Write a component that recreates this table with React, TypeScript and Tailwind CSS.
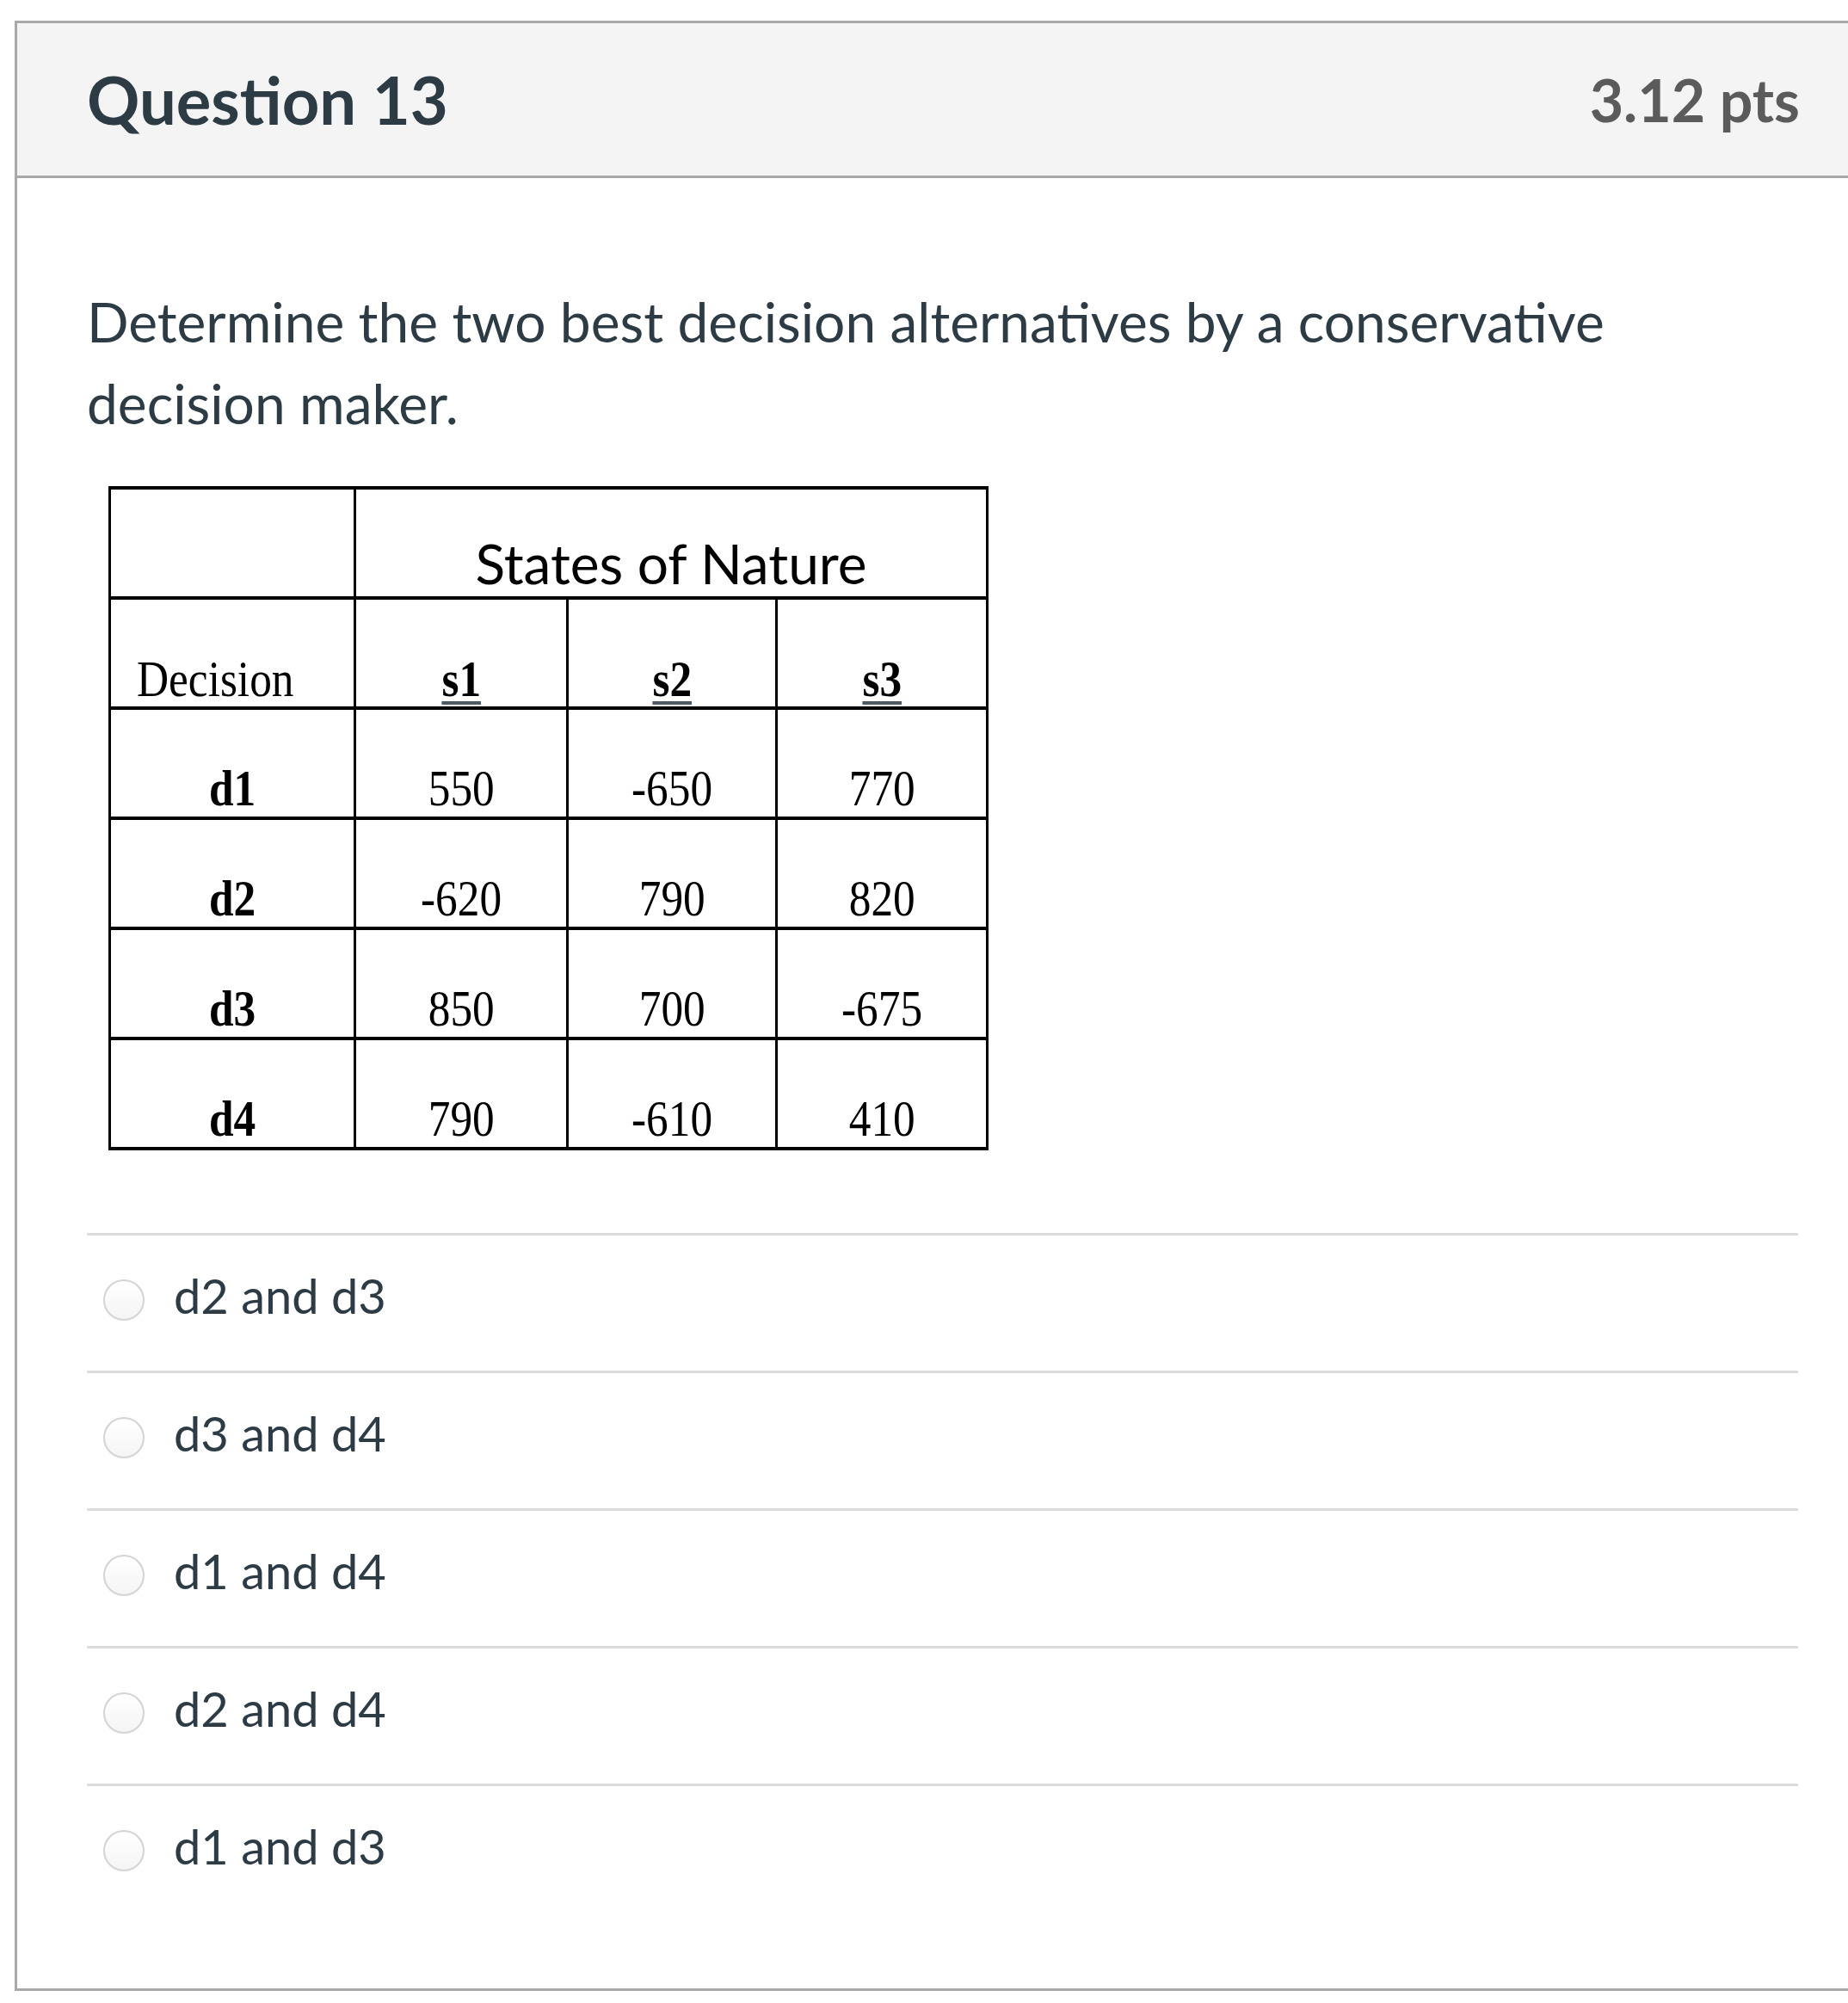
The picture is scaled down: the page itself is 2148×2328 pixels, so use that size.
import React from "react";

const lato = { fontFamily: "Lato, 'Noto Sans', sans-serif" };

const rows = [
    { label: "d1", values: ["550", "-650", "770"] },
    { label: "d2", values: ["-620", "790", "820"] },
    { label: "d3", values: ["850", "700", "-675"] },
    { label: "d4", values: ["790", "-610", "410"] },
];

const answers = ["d2 and d3", "d3 and d4", "d1 and d4", "d2 and d4", "d1 and d3"];

// the payoff table is a scanned image in the original, so the serif text is squeezed a bit
const Serif: React.FC<{ children: React.ReactNode; bold?: boolean; left?: boolean }> = ({ children, bold, left }) => (
    <span
        className={`inline-block text-[59px] leading-none text-black scale-x-[0.87] font-['Liberation_Serif','Times_New_Roman',serif] ${bold ? "font-bold" : "font-normal"} ${left ? "origin-left" : "origin-center"}`}
    >
        {children}
    </span>
);

const PayoffTable: React.FC = () => (
    <div className="grid grid-cols-[285px_247px_243px_245px] border-l-[3px] border-t-4 border-black w-fit ml-[25px] mt-[49px]">
        <div className="h-[128px] border-r-[3px] border-b-4 border-black" />
        <div className="col-span-3 h-[128px] border-r-[3px] border-b-4 border-black flex items-end justify-center pb-[6px]">
            <span className="text-[64px] leading-none text-black" style={lato}>States of Nature</span>
        </div>

        <div className="h-[128px] border-r-[3px] border-b-4 border-black flex items-end pl-[30px] pb-[2px]">
            <Serif left>Decision</Serif>
        </div>
        {["s1", "s2", "s3"].map(s => (
            <div key={s} className="h-[128px] border-r-[3px] border-b-4 border-black flex items-end justify-center pb-[2px]">
                <Serif bold>
                    <span className="underline decoration-[#4d5a63] decoration-4 underline-offset-[6px]">{s}</span>
                </Serif>
            </div>
        ))}

        {rows.map(row => (
            <React.Fragment key={row.label}>
                <div className="h-[128px] border-r-[3px] border-b-4 border-black flex items-end justify-center pb-[3px]">
                    <Serif bold>{row.label}</Serif>
                </div>
                {row.values.map((v, i) => (
                    <div key={i} className="h-[128px] border-r-[3px] border-b-4 border-black flex items-end justify-center pb-[3px]">
                        <Serif>{v}</Serif>
                    </div>
                ))}
            </React.Fragment>
        ))}
    </div>
);

const App: React.FC = () => {
    return (
        <div className="w-full min-h-[2328px] bg-white overflow-hidden pt-[24px]" style={lato}>
            <div className="ml-[17px] border-l-[3px] border-t-[3px] border-b-[3px] border-[#a9a9a9] bg-white">
                {/* header */}
                <div className="h-[180px] bg-[#f4f4f4] border-b-[3px] border-[#a9a9a9] flex items-center justify-between pl-[81px] pr-[56px]">
                    <h2 className="text-[76px] font-bold text-[#2d3b45] leading-none">Question 13</h2>
                    <span className="text-[68px] font-bold text-[#5b5b5b] leading-none">3.12 pts</span>
                </div>

                {/* body */}
                <div className="pl-[81px] pr-[58px] pt-[119px] pb-[78px]">
                    <p className="text-[64px] leading-[95px] text-[#2d3b45]">
                        Determine the two best decision alternatives by a conservative decision maker.
                    </p>

                    <PayoffTable />

                    <div className="mt-[96px]">
                        {answers.map(a => (
                            <label key={a} className="h-[160px] border-t-[3px] border-[#dcdcdc] flex items-start cursor-pointer">
                                <span className="mt-[51px] ml-[19px] w-[48px] h-[48px] rounded-full border-2 border-[#d4d4d4] bg-linear-to-b from-white to-[#f5f5f5] shrink-0" />
                                <span className="mt-[42px] ml-[34px] text-[56px] leading-none text-[#2d3b45]">{a}</span>
                            </label>
                        ))}
                    </div>
                </div>
            </div>
        </div>
    );
};

export default App;
